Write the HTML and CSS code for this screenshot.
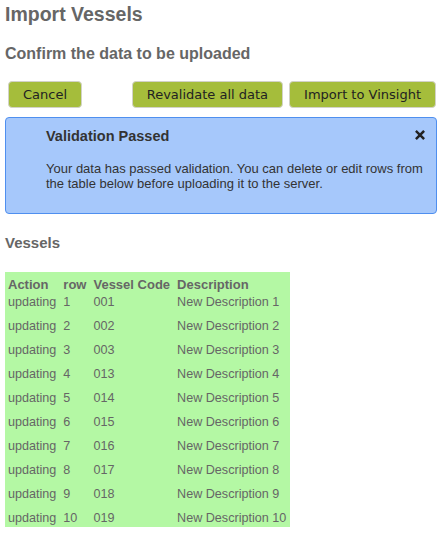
FILE: index.html
```html
<!DOCTYPE html>
<html lang="en">
<head>
  <meta charset="UTF-8" />
  <meta name="viewport" content="width=device-width, initial-scale=1.0"/>
  <title>Import Vessels</title>
  <link rel="stylesheet" href="styles.css">
</head>
<body>
  <h1>Import Vessels</h1>
  <h2>Confirm the data to be uploaded</h2>

  <div class="actions">
    <button class="btn cancel">Cancel</button>
    <button class="btn">Revalidate all data</button>
    <button class="btn">Import to Vinsight</button>
  </div>

  <div class="alert">
    <a class="close" href="#" title="Close">
      <svg width="10" height="10" viewBox="0 0 10 10">
        <path d="M1.8 1.8 L8.2 8.2 M8.2 1.8 L1.8 8.2" stroke="#222" stroke-width="2.5" stroke-linecap="square"/>
      </svg>
    </a>
    <h3>Validation Passed</h3>
    <p>Your data has passed validation. You can delete or edit rows from the table below before uploading it to the server.</p>
  </div>

  <h4>Vessels</h4>

  <table class="vessels">
    <thead>
      <tr><th>Action</th><th>row</th><th>Vessel Code</th><th>Description</th></tr>
    </thead>
    <tbody>
      <tr><td>updating</td><td>1</td><td>001</td><td>New Description 1</td></tr>
      <tr><td>updating</td><td>2</td><td>002</td><td>New Description 2</td></tr>
      <tr><td>updating</td><td>3</td><td>003</td><td>New Description 3</td></tr>
      <tr><td>updating</td><td>4</td><td>013</td><td>New Description 4</td></tr>
      <tr><td>updating</td><td>5</td><td>014</td><td>New Description 5</td></tr>
      <tr><td>updating</td><td>6</td><td>015</td><td>New Description 6</td></tr>
      <tr><td>updating</td><td>7</td><td>016</td><td>New Description 7</td></tr>
      <tr><td>updating</td><td>8</td><td>017</td><td>New Description 8</td></tr>
      <tr><td>updating</td><td>9</td><td>018</td><td>New Description 9</td></tr>
      <tr><td>updating</td><td>10</td><td>019</td><td>New Description 10</td></tr>
    </tbody>
  </table>
</body>
</html>
```

FILE: styles.css
```css
body {
  font-family: "Liberation Sans", Arial, sans-serif;
  color: #666;
  background: #fff;
  margin: 0;
  padding: 0 4px 0 5px;
}

h1 {
  font-size: 19.5px;
  line-height: 24px;
  margin: 0;
  padding-top: 2px;
}

h2 {
  font-size: 16px;
  line-height: 20px;
  margin: 18px 0 0;
}

h4 {
  font-size: 15px;
  line-height: 18px;
  margin: 20px 0 0;
}

.actions {
  display: flex;
  gap: 6px;
  margin: 17px 0 0;
  padding: 0 1px 0 3px;
}

.btn {
  font-family: "DejaVu Sans", Verdana, sans-serif;
  font-size: 13px;
  color: #222;
  background: #a5bd3b;
  border: 1px solid #d2d2c8;
  border-radius: 4px;
  height: 27px;
  padding: 0 14px;
  cursor: pointer;
}

.cancel {
  margin-right: auto;
}

.alert {
  position: relative;
  background: #a6c8fb;
  border: 1px solid #4f8fef;
  border-radius: 4px;
  margin-top: 9px;
  padding: 9px 8px 22px 40px;
  color: #333;
}

.alert h3 {
  font-size: 14.5px;
  line-height: 18px;
  margin: 0;
}

.alert p {
  font-size: 13px;
  line-height: 15px;
  margin: 16px 0 0;
}

.close {
  position: absolute;
  top: 12px;
  right: 11px;
  display: block;
  width: 10px;
  height: 10px;
}

.close svg {
  display: block;
}

.vessels {
  border-collapse: collapse;
  background: #b4f8a4;
  margin-top: 20px;
  color: #666;
}

.vessels th {
  font-size: 13px;
  line-height: 14px;
  text-align: left;
  padding: 6px 4px 0 3px;
}

.vessels td {
  font-size: 12.6px;
  line-height: 16px;
  padding: 2px 4px 6px 3px;
}

.vessels tr:last-child td {
  padding-bottom: 1px;
}
```
